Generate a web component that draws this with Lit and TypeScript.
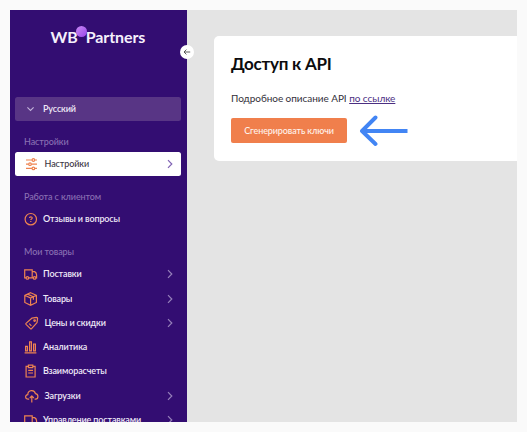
import { LitElement, html, css, svg, nothing } from "lit";
import { customElement, property } from "lit/decorators.js";

const ICONS: Record<string, unknown> = {
  sliders: svg`<path d="M1 3H7M9.8 3H12M1 7.2H3.6M6.4 7.2H12M1 11.4H7M9.8 11.4H12"/><circle cx="8.4" cy="3" r="1.3"/><circle cx="5" cy="7.2" r="1.3"/><circle cx="8.4" cy="11.4" r="1.3"/>`,
  question: svg`<circle cx="6.8" cy="7.2" r="5.7"/><path d="M5.5 6.1C5.5 4.4 8.2 4.4 8.2 6C8.2 7 6.8 7 6.8 8.1M6.8 9.1V9.9"/>`,
  truck: svg`<path d="M2 10.9H0.7V2.8H8.2V10.9H4.8M8.2 4.6H10.6Q12.6 5.6 12.6 8V10.9H12M8.2 10.9H9.2"/><circle cx="3.4" cy="10.9" r="1.3"/><circle cx="10.6" cy="10.9" r="1.3"/>`,
  box: svg`<path d="M6.6 0.7L12.4 3.3V10.5L6.6 13.4L0.8 10.5V3.3ZM0.8 3.3L6.6 6.1L12.4 3.3M6.6 6.1V13.4M3.6 2.1L9.4 4.8V7.8"/>`,
  tag: svg`<path stroke-linejoin="round" d="M6.8 2.2L11.6 1.4Q12.6 1.4 12.6 2.4L12 6.6L6.6 12.6Q6 13.2 5.4 12.6L1 8.4Q0.6 7.8 1 7.4ZM4.2 7.6L6.4 9.8"/><circle cx="9.6" cy="4.6" r="0.8"/>`,
  chart: svg`<path d="M0.6 12.9H12.4M1.6 6.4H3.4V10.9H1.6ZM5.6 1.8H7.4V10.9H5.6ZM9.6 4H11.4V10.9H9.6Z"/>`,
  clipboard: svg`<path d="M4.2 2.3H2.1V13H11.1V2.3H9M4.4 1.2H8.8V3.7H4.4ZM4.2 6.4H9M4.2 9H9"/>`,
  cloud: svg`<path stroke-linejoin="round" d="M4.2 10.2H3.4C-0.2 10.2 -0.2 5.9 2.8 5.7C2.8 0.6 9.6 0.2 10.4 4.6C13.8 4.9 13.6 10 10.6 10.2H9.6M6.8 13.6V7M4.8 9L6.8 6.9L8.8 9"/>`,
};

interface Item {
  icon: string;
  text: string;
  arrow?: boolean;
  active?: boolean;
  wide?: boolean;
}

interface Group {
  title: string;
  items: Item[];
}

const GROUPS: Group[] = [
  { title: "Настройки", items: [{ icon: "sliders", text: "Настройки", arrow: true, active: true, wide: true }] },
  { title: "Работа с клиентом", items: [{ icon: "question", text: "Отзывы и вопросы" }] },
  {
    title: "Мои товары",
    items: [
      { icon: "truck", text: "Поставки", arrow: true },
      { icon: "box", text: "Товары", arrow: true },
      { icon: "tag", text: "Цены и скидки", arrow: true, wide: true },
      { icon: "chart", text: "Аналитика" },
      { icon: "clipboard", text: "Взаиморасчеты" },
      { icon: "cloud", text: "Загрузки", arrow: true, wide: true },
      { icon: "truck", text: "Управление поставками", arrow: true },
    ],
  },
];

@customElement("nav-item")
class NavItem extends LitElement {
  @property({ attribute: false }) item!: Item;

  static styles = css`
    :host { display: block; }
    .row {
      display: flex;
      align-items: center;
      height: 24.3px;
      box-sizing: border-box;
      padding: 0 7px 0 9px;
      border-radius: 2.5px;
      color: #efe9f7;
      font-weight: 600;
      white-space: nowrap;
    }
    .active { background: #fff; color: #3b3544; font-weight: 500; letter-spacing: -0.1px; }
    .icon {
      width: 14px;
      height: 14px;
      margin-right: 5px;
      flex: none;
      fill: none;
      stroke: #ee8350;
      stroke-width: 1.2;
      overflow: visible;
    }
    .wide .icon { margin-right: 5.5px; margin-left: 1px; }
    .text { flex: 1; }
    .chev { width: 8px; height: 10px; flex: none; fill: none; stroke: #9681ba; stroke-width: 1.2; }
    .active .chev { stroke: #8064b4; }
  `;

  render() {
    const { icon, text, arrow, active, wide } = this.item;
    return html`<div class="row ${active ? "active" : ""} ${wide ? "wide" : ""}">
      <svg class="icon" viewBox="0 0 14 14">${ICONS[icon]}</svg>
      <span class="text">${text}</span>
      ${arrow ? html`<svg class="chev" viewBox="0 0 8 10"><path d="M2 1.2L5.8 5L2 8.8"/></svg>` : nothing}
    </div>`;
  }
}

@customElement("app-root")
class AppRoot extends LitElement {
  static styles = css`
    :host {
      display: block;
      width: 527px;
      height: 432px;
      box-sizing: border-box;
      padding: 10px;
      background: #fafafa;
      font-family: Lato, "Noto Sans", sans-serif;
      font-size: 9px;
      letter-spacing: -0.13px;
      line-height: 12px;
      overflow: hidden;
    }
    .frame { display: flex; height: 412px; background: #e4e4e4; overflow: hidden; }
    .side {
      position: relative;
      flex: none;
      width: 177px;
      box-sizing: border-box;
      padding: 0 6.5px 0 5px;
      background: #330d72;
    }
    .logo {
      display: flex;
      align-items: center;
      height: 87.2px;
      box-sizing: border-box;
      padding: 0 0 33px 35.5px;
      color: #f5f0fc;
      font-size: 16px;
      font-weight: 700;
      letter-spacing: -0.08px;
      white-space: nowrap;
    }
    .dot {
      width: 11px;
      height: 11px;
      margin: -12px -1.5px 0 -1.5px;
      border-radius: 50%;
      background: linear-gradient(135deg, #c98af5, #9a45ea);
    }
    .collapse {
      position: absolute;
      right: -7px;
      top: 34.5px;
      width: 14px;
      height: 14px;
      border-radius: 50%;
      background: #fff;
      fill: none;
      stroke: #4b4b4b;
      stroke-width: 0.9;
    }
    .lang {
      display: flex;
      align-items: center;
      height: 24.3px;
      box-sizing: border-box;
      padding-left: 11px;
      border-radius: 2.5px;
      background: #583585;
      color: #efe9f7;
      font-weight: 600;
    }
    .down { width: 9px; height: 6px; margin-right: 8px; fill: none; stroke: #c4b4dc; stroke-width: 1.1; }
    .title {
      height: 30.7px;
      box-sizing: border-box;
      padding: 14.5px 0 0 9px;
      color: #8a70b2;
      font-weight: 500;
      letter-spacing: -0.1px;
      white-space: nowrap;
    }
    .main { flex: 1; padding: 26px 0 0 26.5px; min-width: 0; }
    .card {
      height: 125px;
      box-sizing: border-box;
      padding: 16px 0 0 17.5px;
      border-radius: 5px 0 0 5px;
      background: #fff;
    }
    .head { margin: 0; font-size: 17px; line-height: 24px; font-weight: 700; letter-spacing: -0.25px; color: #0c0c0e; }
    .desc { margin: 16px 0 0; font-size: 10px; line-height: 13px; letter-spacing: -0.05px; color: #33303a; }
    .link { color: #4b2f82; text-decoration: underline; text-underline-offset: 1px; }
    .action { display: flex; align-items: center; margin-top: 8.5px; height: 34px; }
    .btn {
      width: 116px;
      height: 24.5px;
      margin-left: -0.5px;
      padding: 0 0 0 1px;
      border: 0;
      border-radius: 2px;
      background: #f07f4c;
      color: #fff3ec;
      font: 500 9px/24px Lato, "Noto Sans", sans-serif;
      letter-spacing: -0.1px;
      text-align: center;
      white-space: nowrap;
    }
    .pointer { width: 50px; height: 32px; margin-left: 12.5px; fill: none; stroke: #4285f4; stroke-width: 3.9; }
  `;

  render() {
    return html`<div class="frame">
      <nav class="side">
        <div class="logo"><span class="wb">WB</span><i class="dot"></i><span class="pt">Partners</span></div>
        <svg class="collapse" viewBox="0 0 14 14"><path d="M10.2 7H4M6.4 4.6L4 7L6.4 9.4"/></svg>
        <div class="lang">
          <svg class="down" viewBox="0 0 9 6"><path d="M1.4 1.4L4.5 4.4L7.6 1.4"/></svg><span class="lt">Русский</span>
        </div>
        ${GROUPS.map(
          (g) => html`<div class="title">${g.title}</div>
            ${g.items.map((i) => html`<nav-item .item=${i}></nav-item>`)}`,
        )}
      </nav>
      <main class="main">
        <section class="card">
          <h1 class="head">Доступ к API</h1>
          <p class="desc">Подробное описание API <a class="link">по ссылке</a></p>
          <div class="action">
            <button class="btn">Сгенерировать ключи</button>
            <svg class="pointer" viewBox="0 0 50 32"><path d="M48.5 16H3"/><path stroke-linecap="round" stroke-linejoin="round" d="M16.5 2.5L3 16L16.5 29"/></svg>
          </div>
        </section>
      </main>
    </div>`;
  }
}
